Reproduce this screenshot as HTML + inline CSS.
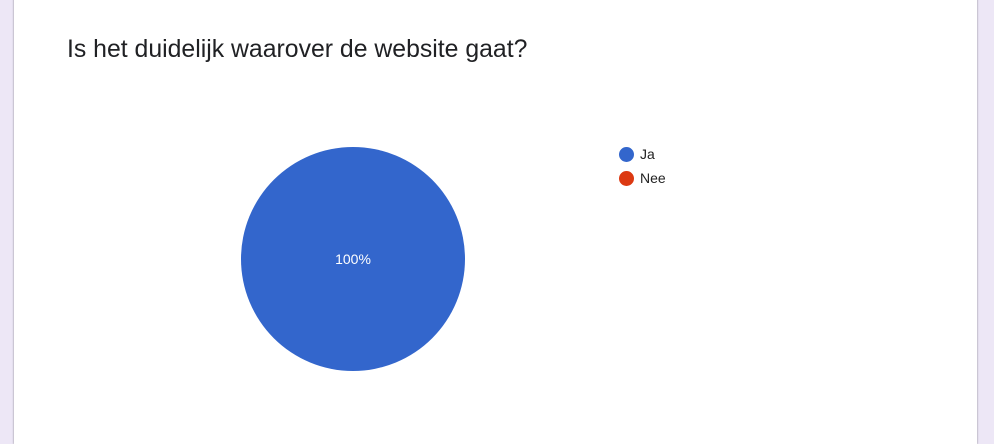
<!DOCTYPE html>
<html><head><style>
html,body{margin:0;width:994px;height:444px;overflow:hidden}
body{background:#ede7f6;position:relative;font-family:"Liberation Sans",Arial,sans-serif}
.card{position:absolute;left:14px;top:-10px;width:963px;height:454px;background:#fff;box-shadow:0 0 2px rgba(0,0,0,.3),0 1px 2px rgba(0,0,0,.15)}
.t{position:absolute;left:67px;top:36px;font-size:24.8px;color:#202124}
.lg{position:absolute;left:640px;font-size:14px;color:#222}
.d{position:absolute;width:15px;height:15px;border-radius:50%;left:619px}
</style></head><body>
<div class="card"></div>
<div class="t">Is het duidelijk waarover de website gaat?</div>
<svg style="position:absolute;left:0;top:0" width="994" height="444">
<circle cx="353" cy="259" r="112" fill="#3366cc"/>
<text x="353" y="264" fill="#fff" font-size="14" text-anchor="middle" font-family="Liberation Sans,Arial,sans-serif">100%</text>
</svg>
<div class="d" style="top:147px;background:#3366cc"></div>
<div class="lg" style="top:146px">Ja</div>
<div class="d" style="top:171px;background:#dc3912"></div>
<div class="lg" style="top:170px">Nee</div>
</body></html>
